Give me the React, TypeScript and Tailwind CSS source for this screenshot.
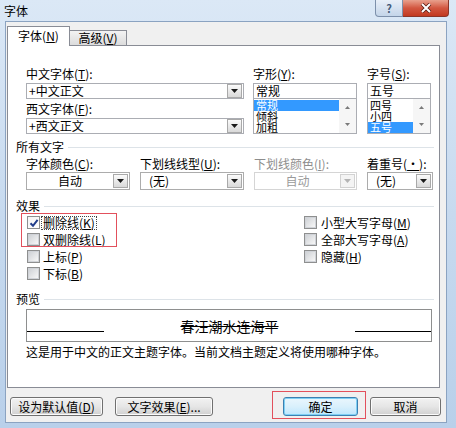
import type { ReactNode } from 'react'

const font = "font-['Noto_Sans_CJK_SC','Noto_Sans',sans-serif]"

function Key({ k }: { k: string }) {
    return (
        <>
            (<span className="underline underline-offset-1">{k}</span>)
        </>
    )
}

function Arrow({ disabled = false }: { disabled?: boolean }) {
    return (
        <div
            className={
                disabled
                    ? 'mr-px flex h-[14px] w-[15px] shrink-0 items-center justify-center border border-[#d2d2d2] bg-[#f4f4f4]'
                    : 'mr-px flex h-[14px] w-[15px] shrink-0 items-center justify-center border border-[#a9a9a9] bg-linear-to-b from-[#fbfbfb] to-[#d9d9d9]'
            }
        >
            <svg width="7" height="4" viewBox="0 0 7 4">
                <path d="M0 0H7L3.5 4Z" fill={disabled ? '#b4b4b4' : '#1a1a1a'} />
            </svg>
        </div>
    )
}

function Combo({ value, width }: { value: string; width: string }) {
    return (
        <div className={`flex h-[16px] items-center border border-[#abadb3] bg-white pl-[2px] ${width}`}>
            <span className="flex-1 whitespace-nowrap leading-[14px]">{value}</span>
            <Arrow />
        </div>
    )
}

function Select({
    value,
    width,
    disabled = false,
    center = false,
}: {
    value: string
    width: string
    disabled?: boolean
    center?: boolean
}) {
    return (
        <div
            className={`flex h-[18px] items-center border bg-white ${width} ${
                disabled ? 'border-[#d5d5d5] text-[#9a9a9a]' : 'border-[#acacac]'
            }`}
        >
            <span className={center ? 'flex-1 text-center' : 'flex-1 pl-[8px]'}>{value}</span>
            <Arrow disabled={disabled} />
        </div>
    )
}

function ListBox({ items, selected }: { items: string[]; selected: number }) {
    return (
        <div className="flex h-[35px] border border-t-0 border-[#abadb3] bg-white">
            <div className="flex flex-1 flex-col pt-px text-[11px]">
                {items.map((it, i) => (
                    <div
                        key={it}
                        className={
                            i === selected
                                ? 'h-[11px] bg-[#3399ff] pl-[2px] leading-[11px] text-white'
                                : 'h-[11px] pl-[2px] leading-[11px]'
                        }
                    >
                        {it}
                    </div>
                ))}
            </div>
            <div className="flex w-[17px] flex-col bg-[#f6f6f6]">
                <div className="flex flex-1 items-center justify-center">
                    <svg width="5" height="3" viewBox="0 0 5 3">
                        <path d="M0 3H5L2.5 0Z" fill="#7a7a7a" />
                    </svg>
                </div>
                <div className="flex flex-1 items-center justify-center">
                    <svg width="5" height="3" viewBox="0 0 5 3">
                        <path d="M0 0H5L2.5 3Z" fill="#7a7a7a" />
                    </svg>
                </div>
            </div>
        </div>
    )
}

function Header({ children }: { children: ReactNode }) {
    return (
        <div className="ml-[8px] mr-[5px] flex h-[14px] items-center">
            <span>{children}</span>
            <div className="ml-[4px] h-px flex-1 bg-[#dde3e8]" />
        </div>
    )
}

function Check({ checked = false }: { checked?: boolean }) {
    return (
        <div className="flex h-[13px] w-[13px] shrink-0 items-center justify-center border border-[#8e8f8f] bg-white">
            <div
                className={
                    checked
                        ? 'flex h-[11px] w-[11px] items-center justify-center bg-linear-to-br from-[#f4f4f4] to-[#ffffff]'
                        : 'h-[11px] w-[11px] border border-[#d0d3d8] bg-linear-to-br from-[#cfd2d6] to-[#f7f7f7]'
                }
            >
                {checked && (
                    <svg width="10" height="10" viewBox="0 0 10 10">
                        <path d="M1.5 5.2L4 7.8L8.6 1.8" fill="none" stroke="#233f8c" strokeWidth="2" />
                    </svg>
                )}
            </div>
        </div>
    )
}

function CheckRow({
    label,
    k,
    checked = false,
    focused = false,
    gap,
}: {
    label: string
    k: string
    checked?: boolean
    focused?: boolean
    gap: string
}) {
    return (
        <div className={`flex h-[17px] items-center ${gap}`}>
            <Check checked={checked} />
            <span className={focused ? 'border border-dotted border-[#444] px-px leading-[12px]' : 'px-[2px]'}>
                {label}
                <Key k={k} />
            </span>
        </div>
    )
}

function Button({ children, width, primary = false }: { children: ReactNode; width: string; primary?: boolean }) {
    return (
        <div
            className={`flex h-[19px] items-center justify-center rounded-[3px] border ${width} ${
                primary
                    ? 'border-[#3c7fb1] bg-linear-to-b from-[#eaf6fd] via-[#d9f0fc] to-[#bee6fd] shadow-[inset_0_0_0_1px_#7fd0f4]'
                    : 'border-[#707070] bg-linear-to-b from-[#f2f2f2] via-[#e6e6e6] to-[#d0d0d0] shadow-[inset_0_0_0_1px_#fbfbfb]'
            }`}
        >
            {children}
        </div>
    )
}

export default function App() {
    return (
        <div
            className={`${font} flex h-[428px] w-[456px] flex-col overflow-hidden bg-linear-to-b from-[#dbe8f6] via-[#c7daef] to-[#b9d0ea] text-[12px] leading-[14px] text-black`}
        >
            {/* title bar */}
            <div className="flex h-[21px] shrink-0 items-start justify-between">
                <span className="ml-[4px] mt-[4px]">字体</span>
                <div className="mr-[7px] flex h-[17px]">
                    <div className="flex w-[28px] items-center justify-center rounded-bl-[4px] border border-t-0 border-[#7d90ab] bg-linear-to-b from-[#e8eff8] to-[#c4d5e9] text-[11px] font-bold leading-[11px] text-[#445a78]">
                        ?
                    </div>
                    <div className="flex w-[46px] items-center justify-center rounded-br-[4px] border border-l-0 border-t-0 border-[#8b3528] bg-linear-to-b from-[#e8a08d] via-[#d25640] to-[#c2391f]">
                        <svg width="12" height="10" viewBox="0 0 12 10">
                            <path d="M2 1L10 9M10 1L2 9" stroke="#5b1c12" strokeWidth="3.6" />
                            <path d="M2 1L10 9M10 1L2 9" stroke="#ffffff" strokeWidth="2" />
                        </svg>
                    </div>
                </div>
            </div>

            {/* dialog body */}
            <div className="ml-[5px] mr-[9px] flex h-[402px] flex-col border border-[#8ba3c1] bg-[#f0f0f0]">
                {/* tabs */}
                <div className="flex h-[23px] items-end pl-px">
                    <div className="relative z-10 -mb-px flex h-[20px] w-[63px] items-center justify-center border border-b-0 border-[#898c95] bg-white pb-[2px]">
                        字体<Key k="N" />
                    </div>
                    <div className="flex h-[15px] w-[57px] items-center justify-center border border-b-0 border-l-0 border-[#898c95] bg-linear-to-b from-[#f3f3f3] to-[#dcdcdc]">
                        高级<Key k="V" />
                    </div>
                </div>

                {/* tab panel */}
                <div className="ml-px h-[343px] w-[433px] border border-[#898c95] bg-white">
                    {/* fonts row */}
                    <div className="ml-[18px] mt-[21px] flex">
                        <div className="flex w-[218px] flex-col">
                            <div className="h-[14px]">
                                中文字体<Key k="T" />:
                            </div>
                            <div className="mt-[2px]">
                                <Combo value="+中文正文" width="w-[218px]" />
                            </div>
                            <div className="mt-[3px] h-[14px]">
                                西文字体<Key k="F" />:
                            </div>
                            <div className="mt-[2px]">
                                <Combo value="+西文正文" width="w-[218px]" />
                            </div>
                        </div>
                        <div className="ml-[9px] flex w-[104px] flex-col">
                            <div className="h-[14px]">
                                字形<Key k="Y" />:
                            </div>
                            <div className="mt-[2px] h-[16px] border border-[#abadb3] bg-white pl-[2px] leading-[14px]">常规</div>
                            <ListBox items={['常规', '倾斜', '加粗']} selected={0} />
                        </div>
                        <div className="ml-[10px] flex w-[64px] flex-col">
                            <div className="h-[14px]">
                                字号<Key k="S" />:
                            </div>
                            <div className="mt-[2px] h-[16px] border border-[#abadb3] bg-white pl-[2px] leading-[14px]">五号</div>
                            <ListBox items={['四号', '小四', '五号']} selected={2} />
                        </div>
                    </div>

                    {/* all text */}
                    <div className="mt-[6px]">
                        <Header>所有文字</Header>
                    </div>
                    <div className="ml-[18px] mt-[3px] flex gap-[10px]">
                        <div className="flex w-[104px] flex-col gap-px">
                            <div className="h-[14px]">
                                字体颜色<Key k="C" />:
                            </div>
                            <Select value="自动" width="w-[104px]" center />
                        </div>
                        <div className="flex w-[104px] flex-col gap-px">
                            <div className="h-[14px]">
                                下划线线型<Key k="U" />:
                            </div>
                            <Select value="(无)" width="w-[104px]" />
                        </div>
                        <div className="flex w-[103px] flex-col gap-px">
                            <div className="h-[14px] text-[#8d8d8d]">
                                下划线颜色<Key k="I" />:
                            </div>
                            <Select value="自动" width="w-[103px]" disabled center />
                        </div>
                        <div className="flex w-[66px] flex-col gap-px">
                            <div className="h-[14px] whitespace-nowrap">
                                着重号<Key k="·" />:
                            </div>
                            <Select value="(无)" width="w-[66px]" />
                        </div>
                    </div>

                    {/* effects */}
                    <div className="mt-[9px]">
                        <Header>效果</Header>
                    </div>
                    <div className="ml-[19px] mt-px flex">
                        <div className="relative flex w-[277px] flex-col">
                            <span className="pointer-events-none absolute left-[-6px] top-[-1px] h-[34px] w-[96px] border border-[#e2505c]" />
                            <CheckRow label="删除线" k="K" checked focused gap="gap-[1px]" />
                            <CheckRow label="双删除线" k="L" gap="gap-[1px]" />
                            <CheckRow label="上标" k="P" gap="gap-[1px]" />
                            <CheckRow label="下标" k="B" gap="gap-[1px]" />
                        </div>
                        <div className="flex flex-col">
                            <CheckRow label="小型大写字母" k="M" gap="gap-[2px]" />
                            <CheckRow label="全部大写字母" k="A" gap="gap-[2px]" />
                            <CheckRow label="隐藏" k="H" gap="gap-[2px]" />
                        </div>
                    </div>

                    {/* preview */}
                    <div className="mt-[10px]">
                        <Header>预览</Header>
                    </div>
                    <div className="ml-[18px] mt-[3px] flex h-[33px] w-[406px] items-center border border-[#8e8f8f] bg-white">
                        <div className="mt-[12px] h-px w-[77px] bg-black" />
                        <div className="flex-1 text-center text-[14px] leading-[16px] line-through">春汪潮水连海平</div>
                        <div className="mt-[12px] h-px w-[76px] bg-black" />
                    </div>
                    <div className="ml-[18px] mt-[3px] h-[14px]">
                        这是用于中文的正文主题字体。当前文档主题定义将使用哪种字体。
                    </div>
                </div>

                {/* buttons */}
                <div className="mt-[9px] flex justify-between">
                    <div className="ml-[4px] flex gap-[12px]">
                        <Button width="w-[93px]">
                            设为默认值<Key k="D" />
                        </Button>
                        <Button width="w-[98px]">
                            文字效果<Key k="E" />...
                        </Button>
                    </div>
                    <div className="mr-[5px] flex gap-[12px]">
                        <div className="relative">
                            <span className="pointer-events-none absolute left-[-11px] top-[-6px] h-[28px] w-[94px] border border-[#e2505c]" />
                            <Button width="w-[75px]" primary>
                                确定
                            </Button>
                        </div>
                        <Button width="w-[71px]">取消</Button>
                    </div>
                </div>
            </div>
        </div>
    )
}
